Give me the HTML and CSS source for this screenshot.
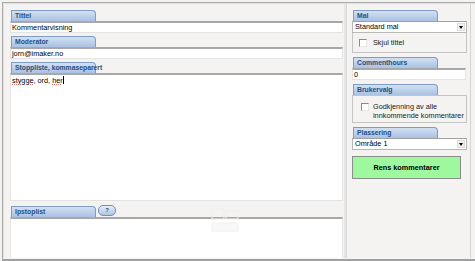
FILE: index.html
```html
<!DOCTYPE html>
<html>
<head>
<meta charset="utf-8">
<link rel="stylesheet" href="styles.css">
</head>
<body>
<div class="window">
  <div class="inner">
    <div class="left">
      <div class="tab">Tittel</div>
      <div class="field">Kommentarvisning</div>
      <div class="tab">Moderator</div>
      <div class="field">jorn@imaker.no</div>
      <div class="tab">Stoppliste, kommaseparert</div>
      <div class="area big"><span class="sp">stygge</span>, ord, <span class="sp">her</span><span class="caret"></span></div>
      <div class="tabrow">
        <div class="tab">Ipstoplist</div>
        <div class="help">?</div>
        <svg class="ghost" width="30" height="28" viewBox="0 0 30 28"><rect x="2" y="2" width="12" height="10" fill="none" stroke="#efefef"/><rect x="16" y="4" width="12" height="8" fill="none" stroke="#efefef"/><rect x="2" y="16" width="26" height="8" fill="#f8f8f8" stroke="#f0f0f0"/></svg>
      </div>
      <div class="area small"></div>
    </div>
    <div class="right">
      <div class="tab">Mal</div>
      <div class="select">Standard mal<span class="arrow"></span></div>
      <div class="box"><span class="cb"></span>Skjul tittel</div>
      <div class="tab">Commenthours</div>
      <div class="field rf">0</div>
      <div class="tab">Brukervalg</div>
      <div class="box two"><span class="cb"></span><span>Godkjenning av alle<br>innkommende kommentarer</span></div>
      <div class="tab">Plassering</div>
      <div class="select">Område 1<span class="arrow"></span></div>
      <div class="btn">Rens kommentarer</div>
    </div>
  </div>
</div>
</body>
</html>
```

FILE: styles.css
```css
html, body { margin: 0; padding: 0; }
body {
  width: 475px; height: 261px; overflow: hidden;
  background: #f4f3f1;
  font-family: "Liberation Sans", Arial, sans-serif;
  font-size: 7.3px; color: #000;
}
.window {
  margin: 2px 0 0 2px;
  border-top: 1px solid #a9a9a9;
  border-left: 1px solid #a9a9a9;
  height: 256px;
  border-bottom: 2px solid #a0a0a0;
}
.inner {
  border-top: 1px solid #e2e2e2;
  border-left: 1px solid #e2e2e2;
  height: 255px;
  display: flex;
  padding-left: 6px;
  box-sizing: border-box;
}
.left { width: 333px; padding-top: 6px; display: flex; flex-direction: column; }
.tab {
  width: 85px; height: 11px; box-sizing: border-box;
  margin-left: 1px;
  border: 1px solid #7f9cc6; border-bottom: none;
  border-top-right-radius: 4px;
  background: linear-gradient(#d3e0f2, #a9c1e3);
  color: #274f7c; font-weight: bold; font-size: 6.8px;
  line-height: 10px; padding-left: 3px;
  white-space: nowrap;
}
.field {
  height: 12px; box-sizing: border-box;
  background: #fff;
  border: 1px solid #e4e4e4; border-top: 2px solid #a8a8a8;
  line-height: 9px; padding-left: 1px;
  margin-bottom: 3px;
}
.area {
  background: #fff;
  border: 1px solid #e4e4e4; border-top: 2px solid #a8a8a8;
  box-sizing: border-box; padding: 1px 1px;
}
.area.big { height: 128px; }
.area.small { height: 41px; border-bottom: none; }
.sp { text-decoration: underline dotted #e07070; text-decoration-thickness: 1px; text-underline-offset: 1px; }
.caret { display: inline-block; width: 1px; height: 8px; background: #000; vertical-align: -1px; }
.tabrow { display: flex; align-items: flex-end; margin-top: 3px; height: 13px; position: relative; }
.help {
  width: 16px; height: 9px; margin-left: 2px; margin-bottom: 1px;
  border: 1px solid #6f8fbf; border-radius: 5px;
  background: linear-gradient(#e6eef9, #aec4e6);
  color: #274f7c; font-weight: bold; font-size: 6px; line-height: 9px; text-align: center;
}
.ghost { position: absolute; left: 200px; top: 3px; }
.right {
  margin-left: 3px;
  width: 125px; height: 254px; box-sizing: border-box;
  border-left: 1px solid #d4d4d4;
  border-right: 1px solid #d4d4d4;
  box-shadow: inset 1px 0 0 #fafafa, -2px 0 0 #e6e6e6;
  padding: 6px 3px 0 5px;
  display: flex; flex-direction: column;
}
.right .tab { margin-left: 1px; }
.select {
  height: 12px; box-sizing: border-box; position: relative;
  background: #fff; border: 1px solid #b8b8b8; border-top: 1px solid #a0a0a0;
  line-height: 10px; padding-left: 2px;
  width: 115px;
}
.arrow {
  position: absolute; right: 1px; top: 1px; width: 8px; height: 8px;
  background: #f0f0f0; border: 1px solid #ddd; box-sizing: border-box;
}
.arrow::after {
  content: ""; position: absolute; left: 1px; top: 2px;
  border-left: 2.5px solid transparent; border-right: 2.5px solid transparent;
  border-top: 3px solid #000;
}
.box {
  width: 115px; height: 20px; box-sizing: border-box;
  border: 1px solid #c4c4c4; border-top: none;
  display: flex; align-items: center; padding-left: 6px;
  color: #222;
  margin-bottom: 4px;
}
.box.two { height: 28px; border-top: 1px solid #c4c4c4; align-items: flex-start; padding-top: 6px; padding-left: 8px; line-height: 9px; white-space: nowrap; }
.cb {
  width: 8px; height: 8px; box-sizing: border-box; margin-right: 6px; flex: none;
  border: 1px solid #8a8a8a; border-right-color: #e8e8e8; border-bottom-color: #e8e8e8;
  background: #fff;
}
.box.two .cb { margin-top: 1px; margin-right: 4px; }
.rf { width: 114px; margin-bottom: 4px; }
.btn {
  margin-top: 6px;
  width: 109px; height: 23px; box-sizing: border-box;
  background: #9ef89e; border: 1px solid #8c8c8c;
  font-weight: bold; font-size: 7.3px; text-align: center; line-height: 21px;
}
```
